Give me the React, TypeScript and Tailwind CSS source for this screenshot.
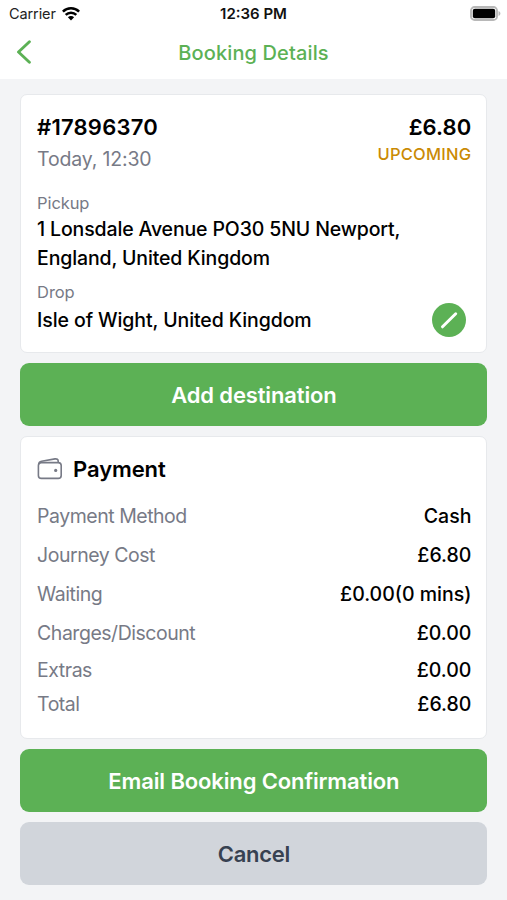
import type { ReactNode } from "react"

type PaymentRow = {
  label: string
  value: string
  className: string
}

const paymentRows: PaymentRow[] = [
  { label: "Payment Method", value: "Cash", className: "h-[39px]" },
  { label: "Journey Cost", value: "£6.80", className: "h-[39px]" },
  { label: "Waiting", value: "£0.00(0 mins)", className: "h-[39px]" },
  { label: "Charges/Discount", value: "£0.00", className: "h-[39px]" },
  { label: "Extras", value: "£0.00", className: "h-[35px]" },
  { label: "Total", value: "£6.80", className: "h-[33px]" },
]

function WifiIcon() {
  return (
    <svg width="18" height="14" viewBox="0 0 18 14" fill="none" stroke="#000" strokeWidth="2.5">
      <path d="M0.9 4.7a11.5 11.5 0 0 1 16.2 0" />
      <path d="M3.7 7.9a7.5 7.5 0 0 1 10.6 0" />
      <path d="M9 13.4 5.9 10.3a4.4 4.4 0 0 1 6.2 0Z" fill="#000" stroke="none" />
    </svg>
  )
}

function BatteryIcon() {
  return (
    <svg width="31" height="15" viewBox="0 0 31 15">
      <rect x="1" y="1" width="26" height="13" rx="3.6" fill="#fff" stroke="#b8b8b8" strokeWidth="1.9" />
      <rect x="2.8" y="2.8" width="22.4" height="9.4" rx="2" fill="#000" />
      <path d="M28.5 5v5c1.2-.4 1.9-1.4 1.9-2.5S29.7 5.4 28.5 5Z" fill="#b8b8b8" />
    </svg>
  )
}

function WalletIcon() {
  return (
    <svg width="26" height="24" viewBox="0 0 26 24" fill="none" stroke="#777a86" strokeWidth="1.6" strokeLinejoin="round">
      <rect x="1.4" y="5.6" width="22.8" height="15.8" rx="3" />
      <path d="M1.6 7.5c.1-1.9 1.2-2.9 3-3.2L18 1.900c1.900-.3 3.200.5 3.200 2.200v1.500" />
      <circle cx="18.7" cy="13.4" r="1.6" fill="#777a86" stroke="none" />
    </svg>
  )
}

function Card(props: { className: string; children: ReactNode }) {
  return (
    <section
      className={`rounded-[7px] border border-[#e7e9ec] bg-white pr-[15px] pl-[15.7px] ${props.className}`}
    >
      {props.children}
    </section>
  )
}

function ActionButton(props: { className: string; children: ReactNode }) {
  return (
    <button
      type="button"
      className={`flex h-[63px] w-full shrink-0 items-center justify-center rounded-[9px] pt-[2px] text-[22px] font-semibold ${props.className}`}
    >
      {props.children}
    </button>
  )
}

export default function App() {
  return (
    <div className="flex h-[900px] w-[507px] flex-col overflow-hidden bg-[#f3f4f6] font-['Inter','Liberation_Sans',sans-serif] text-black">
      <header className="h-[79px] shrink-0 bg-white">
        <div className="grid h-[27px] grid-cols-3 items-center pr-[6px] pl-[9px] text-[14.5px]">
          <div className="flex items-center gap-[6px]">
            <span className="tracking-[-0.1px] text-[#222]">Carrier</span>
            <WifiIcon />
          </div>
          <span className="pt-[2px] pr-[3px] text-center text-[15px] font-semibold text-[#111]">12:36 PM</span>
          <div className="flex justify-end">
            <BatteryIcon />
          </div>
        </div>
        <div className="grid h-[50px] grid-cols-[48px_1fr_48px] items-center">
          <button type="button" className="pl-[16px]" aria-label="Back">
            <svg width="16" height="24" viewBox="0 0 16 24" fill="none" stroke="#5cb155" strokeWidth="2.9" strokeLinecap="round" strokeLinejoin="round">
              <path d="M13.4 1.7 2.5 12l10.9 10.3" />
            </svg>
          </button>
          <h1 className="pt-px text-center text-[20px] font-medium tracking-[0.12px] text-[#5cb155]">Booking Details</h1>
        </div>
      </header>

      <main className="flex flex-col pt-[15px] pr-[19.6px] pl-[20.4px]">
        <Card className="h-[258.5px] pt-[16px]">
          <div className="flex justify-between">
            <div>
              <h2 className="text-[22px] leading-[32px] font-semibold tracking-[0.22px]">#17896370</h2>
              <p className="text-[19.5px] leading-[32px] tracking-[-0.17px] text-[#777a86]">Today, 12:30</p>
            </div>
            <div className="text-right">
              <p className="text-[22px] leading-[32px] font-semibold tracking-[0.1px]">£6.80</p>
              <p className="text-[16.5px] leading-[22px] font-medium tracking-[0.26px] text-[#ca8a04]">UPCOMING</p>
            </div>
          </div>
          <p className="mt-[17px] text-[16.5px] leading-[22px] tracking-[-0.1px] text-[#777a86]">Pickup</p>
          <p className="mt-px text-[19.5px] leading-[29px] font-medium tracking-[-0.14px]">
            1 Lonsdale Avenue PO30 5NU Newport,
            <br />
            England, United Kingdom
          </p>
          <p className="mt-[8px] text-[16.5px] leading-[22px] tracking-[-0.1px] text-[#777a86]">Drop</p>
          <div className="flex h-[34px] items-center justify-between pr-[5px]">
            <p className="pt-[2px] text-[19.5px] font-medium tracking-[-0.1px]">Isle of Wight, United Kingdom</p>
            <button type="button" aria-label="Edit" className="size-[34px] rounded-full bg-[#5cb155]">
              <svg width="34" height="34" viewBox="0 0 34 34" stroke="#fff" strokeWidth="3" strokeLinecap="round">
                <path d="M10.5 23.8 23.7 10.8" />
              </svg>
            </button>
          </div>
        </Card>

        <ActionButton className="mt-[10px] bg-[#5cb155] tracking-[-0.13px] text-white">
          Add destination
        </ActionButton>

        <Card className="mt-[10px] h-[303px] pt-[17.4px]">
          <div className="flex h-[30px] items-center gap-[10px]">
            <WalletIcon />
            <h2 className="pt-[2px] text-[22px] font-semibold tracking-[-0.1px]">Payment</h2>
          </div>
          <div className="mt-[13px] text-[19.5px]">
            {paymentRows.map((row) => (
              <div key={row.label} className={`flex items-center justify-between ${row.className}`}>
                <span className="tracking-[-0.48px] text-[#777a86]">{row.label}</span>
                <span className="font-medium">{row.value}</span>
              </div>
            ))}
          </div>
        </Card>

        <ActionButton className="mt-[10px] bg-[#5cb155] tracking-[-0.13px] text-white">
          Email Booking Confirmation
        </ActionButton>
        <ActionButton className="mt-[10px] bg-[#d1d5db] tracking-[-0.3px] text-[#374151]">
          Cancel
        </ActionButton>
      </main>
    </div>
  )
}
